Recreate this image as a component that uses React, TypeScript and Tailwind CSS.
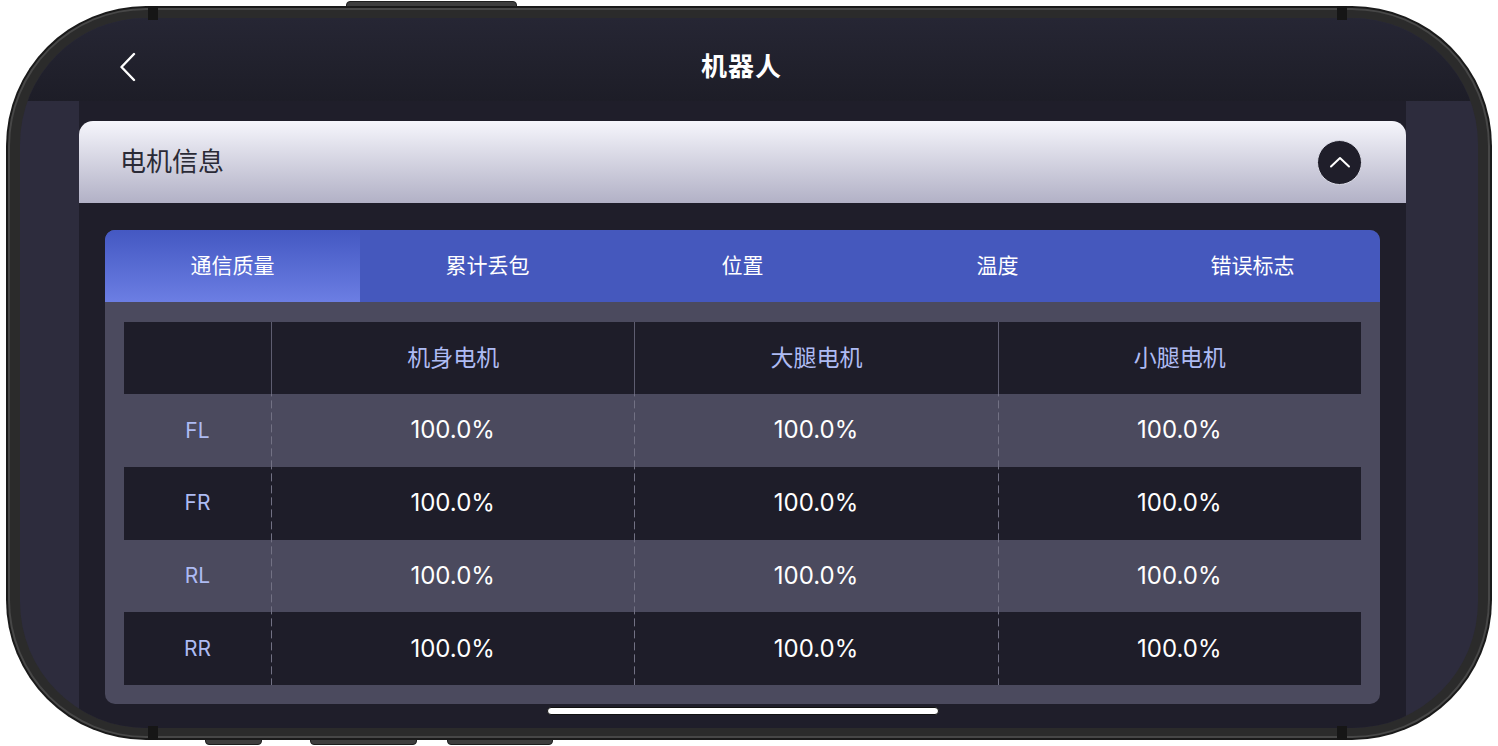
import React from "react";

const cols = ["机身电机", "大腿电机", "小腿电机"];
const rows = [
  { label: "FL", light: true },
  { label: "FR", light: false },
  { label: "RL", light: true },
  { label: "RR", light: false },
];
const tabs = ["通信质量", "累计丢包", "位置", "温度", "错误标志"];

const dash =
  "bg-[linear-gradient(to_bottom,#727184_0,#727184_8px,transparent_8px,transparent_12px)] bg-[length:1px_12px] bg-repeat-y bg-left";

export default function App() {
  return (
    <div className="relative w-[1498px] h-[746px] bg-white overflow-hidden font-['Inter','Noto_Sans_CJK_SC',sans-serif]">
      {/* hardware buttons */}
      <div className="absolute left-[346px] top-[1px] w-[171px] h-[8px] rounded-t-[4px] bg-[#3e3e3e] border border-[#1e1e1e]" />
      <div className="absolute left-[205px] top-[737px] w-[57px] h-[8px] rounded-b-[4px] bg-[#3e3e3e] border border-[#1e1e1e]" />
      <div className="absolute left-[310px] top-[737px] w-[107px] h-[8px] rounded-b-[4px] bg-[#3e3e3e] border border-[#1e1e1e]" />
      <div className="absolute left-[447px] top-[737px] w-[106px] h-[8px] rounded-b-[4px] bg-[#3e3e3e] border border-[#1e1e1e]" />

      <div className="h-full p-[6px]">
        <div className="relative h-full rounded-[140px] bg-[#1a1a1a] p-[2px]">
          {/* antenna lines */}
          <div className="absolute left-[142px] top-0 w-[10px] h-[14px] bg-[#161616] z-10" />
          <div className="absolute left-[1331px] top-0 w-[10px] h-[14px] bg-[#161616] z-10" />
          <div className="absolute left-[142px] bottom-0 w-[10px] h-[14px] bg-[#161616] z-10" />
          <div className="absolute left-[1331px] bottom-0 w-[10px] h-[14px] bg-[#161616] z-10" />
          <div className="h-full rounded-[138px] bg-[#474747] p-[2px]">
            <div className="h-full rounded-[136px] bg-[#2b2b2b] px-[10px] py-[8px]">
              {/* screen */}
              <div className="relative h-full rounded-[126px] overflow-hidden flex flex-col bg-[#2d2c3d]">
                {/* nav bar */}
                <div className="h-[83px] shrink-0 bg-gradient-to-b from-[#262634] to-[#1d1d27] grid grid-cols-[1fr_auto_1fr] items-center pt-[14px] pr-[15px]">
                  <div className="flex items-center pl-[100px]">
                    <svg width="16" height="30" viewBox="0 0 16 30" fill="none">
                      <polyline points="14,2 1.5,15 14,28" stroke="white" strokeWidth="2.4" strokeLinecap="round" strokeLinejoin="round" />
                    </svg>
                  </div>
                  <div className="text-white text-[26px] font-bold leading-none tracking-[1px]">机器人</div>
                  <div />
                </div>

                {/* body */}
                <div className="flex-1 flex">
                  <div className="w-[59px] shrink-0" />
                  <div className="w-[1327px] shrink-0 bg-[#1f1e2a] pt-[20px] flex flex-col">
                    {/* card header */}
                    <div className="h-[82px] rounded-t-[14px] bg-gradient-to-b from-[#f6f6fc] to-[#b2b1c6] flex items-center justify-between pl-[41px] pr-[44px]">
                      <div className="text-[26px] text-[#2a2a36] leading-none">电机信息</div>
                      <div className="w-[45px] h-[45px] rounded-full bg-[#1f1e2a] border border-[#d9d9e4] flex items-center justify-center">
                        <svg width="22" height="14" viewBox="0 0 22 14" fill="none">
                          <polyline points="2,11.5 11,3 20,11.5" stroke="white" strokeWidth="2" strokeLinecap="round" strokeLinejoin="round" />
                        </svg>
                      </div>
                    </div>

                    {/* panel */}
                    <div className="mx-[26px] mt-[27px] rounded-[10px] bg-[#4b4a5e] overflow-hidden">
                      <div className="h-[72px] grid grid-cols-5 bg-[#4558bd]">
                        {tabs.map((t, i) => (
                          <div
                            key={t}
                            className={
                              i === 0
                                ? "flex items-center justify-center text-white text-[21px] bg-gradient-to-b from-[#4458c2] to-[#6c7ee3]"
                                : "flex items-center justify-center text-white text-[21px]"
                            }
                          >
                            {t}
                          </div>
                        ))}
                      </div>

                      <div className="px-[19px] pt-[20px] pb-[19px]">
                        <div className="h-[363px] flex flex-col">
                          <div className="h-[72px] grid grid-cols-[147px_1fr_1fr_1fr] bg-[#1e1d29]">
                            <div />
                            {cols.map((c) => (
                              <div key={c} className="flex items-center justify-center border-l border-[#5e5d70] text-[23px] text-[#aebbf3]">
                                {c}
                              </div>
                            ))}
                          </div>
                          {rows.map((r) => (
                            <div
                              key={r.label}
                              className={
                                r.light
                                  ? "flex-1 grid grid-cols-[147px_1fr_1fr_1fr]"
                                  : "flex-1 grid grid-cols-[147px_1fr_1fr_1fr] bg-[#1e1d29]"
                              }
                            >
                              <div className="flex items-center justify-center text-[21px] text-[#aebbf3]">{r.label}</div>
                              {cols.map((c) => (
                                <div key={c} className={"flex items-center justify-center text-[24px] text-white " + dash}>
                                  100.0%
                                </div>
                              ))}
                            </div>
                          ))}
                        </div>
                      </div>
                    </div>
                  </div>
                  <div className="flex-1" />
                </div>

                {/* home indicator */}
                <div className="absolute left-[527px] bottom-[13px] w-[392px] h-[8px] rounded-full bg-white border border-[#111]" />
              </div>
            </div>
          </div>
        </div>
      </div>
    </div>
  );
}
